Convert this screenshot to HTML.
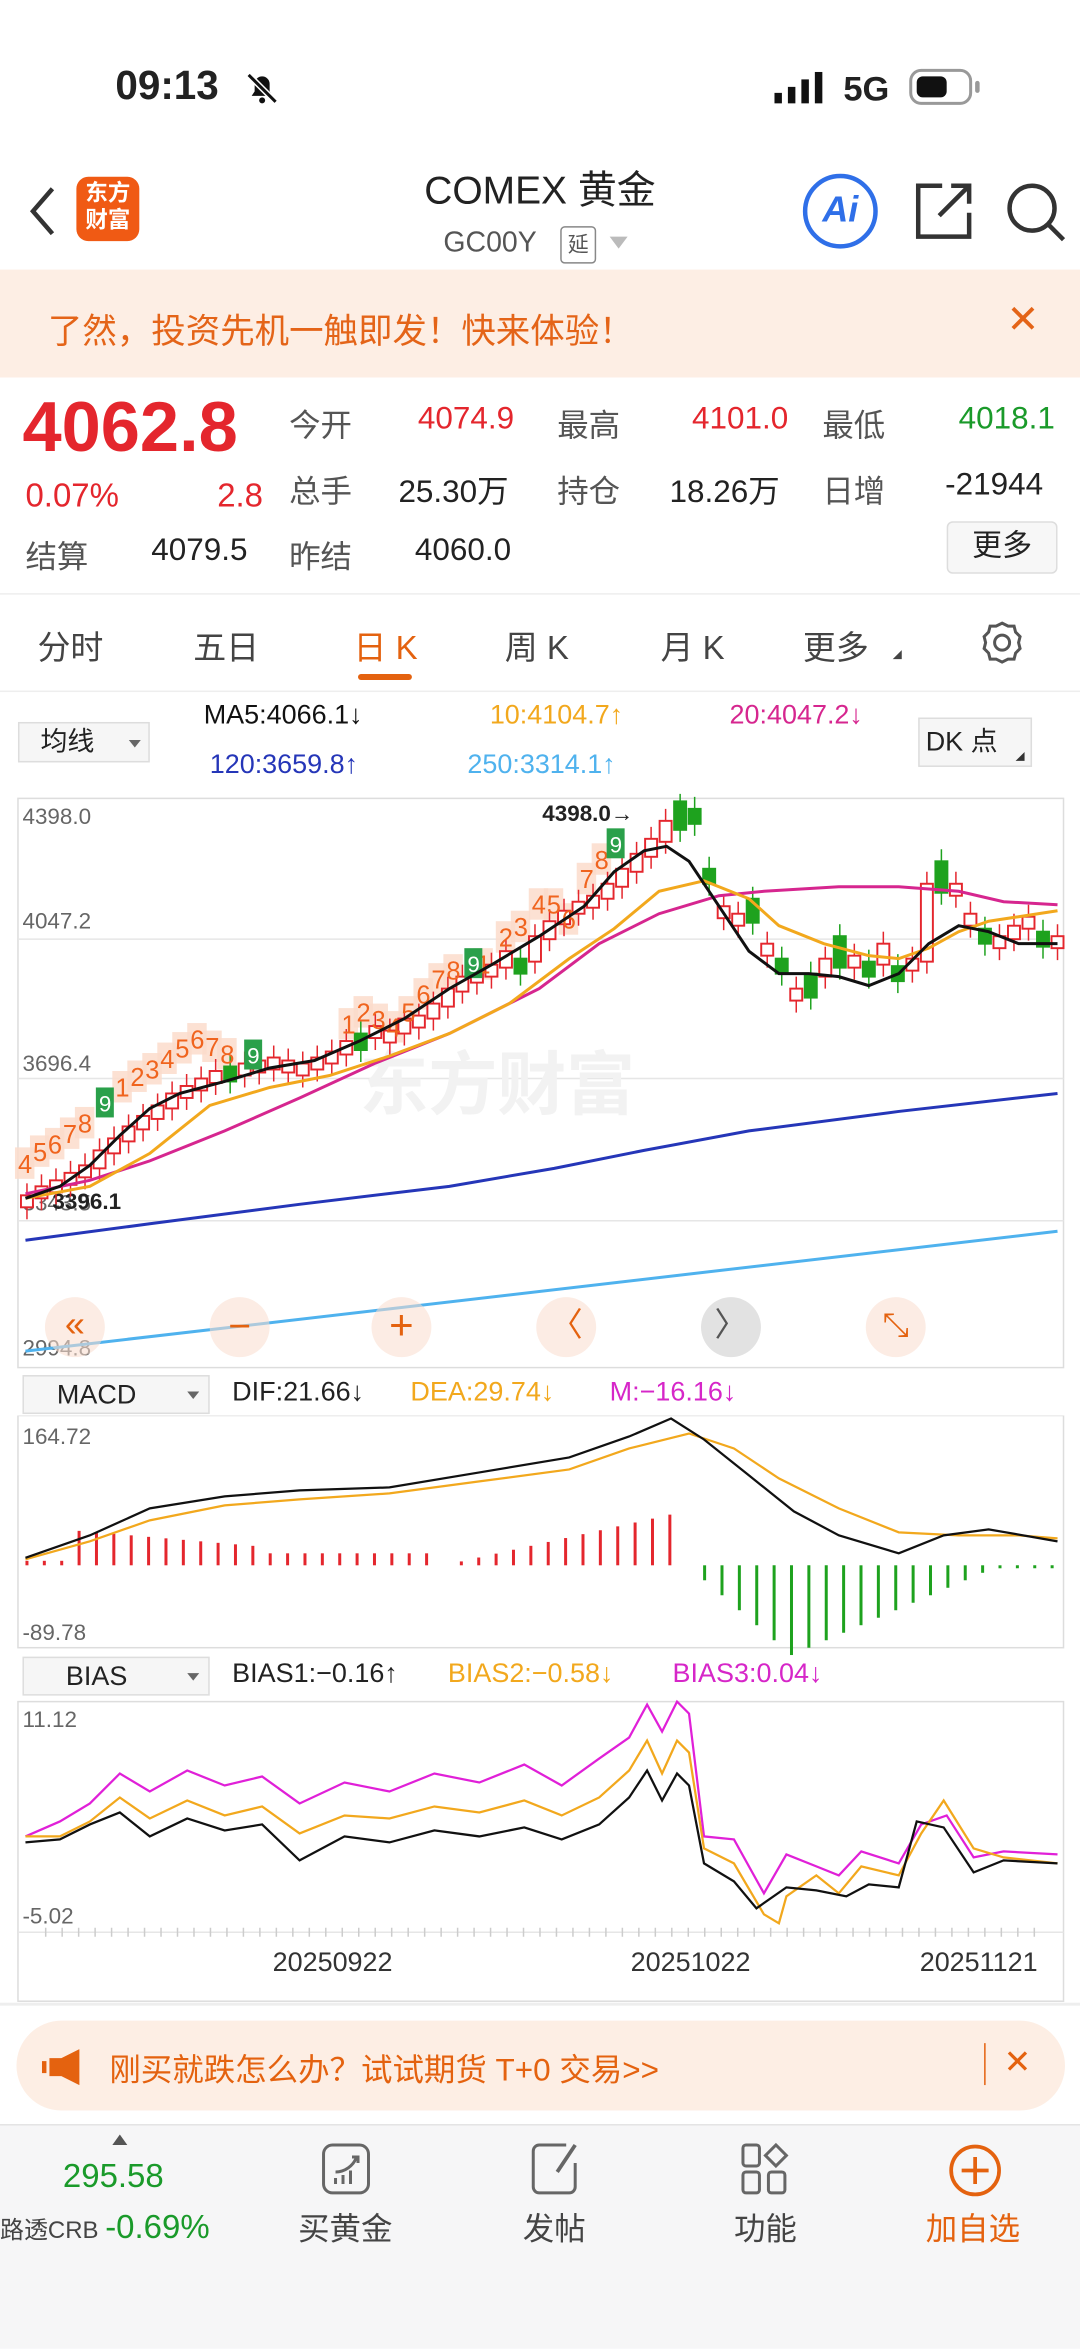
<!DOCTYPE html>
<html><head><meta charset="utf-8">
<style>
*{margin:0;padding:0;box-sizing:border-box}
html,body{width:1080px;height:2349px;overflow:hidden;background:#fff}
#w{position:absolute;left:0;top:0;width:721px;height:1568px;transform:scale(1.4979);transform-origin:0 0;font-family:"Liberation Sans","Noto Sans CJK SC",sans-serif;color:#222}
.a{position:absolute;white-space:nowrap}
.r{color:#e4262d}.g{color:#1a9a2a}.gy{color:#555}
</style></head><body><div id="w">
<!-- status -->
<div class="a" style="left:77px;top:42px;font-size:27px;font-weight:bold">09:13</div>
<svg class="a" style="left:162px;top:46px" width="26" height="26" viewBox="0 0 26 26"><path d="M6 18h14l-2-3v-5a5 5 0 0 0-10 0v5z" fill="#111"/><circle cx="13" cy="21" r="2" fill="#111"/><path d="M4 4l18 18" stroke="#fff" stroke-width="4"/><path d="M4 4l18 18" stroke="#111" stroke-width="2"/></svg>
<svg class="a" style="left:517px;top:48px" width="34" height="22"><rect x="0" y="14" width="5" height="7" fill="#111"/><rect x="9" y="10" width="5" height="11" fill="#111"/><rect x="18" y="5" width="5" height="16" fill="#111"/><rect x="27" y="0" width="5" height="21" fill="#111"/></svg>
<div class="a" style="left:563px;top:46px;font-size:23px;font-weight:bold">5G</div>
<div class="a" style="left:607px;top:46px;width:42px;height:24px;border:2px solid #999;border-radius:8px"><div style="margin:3px;width:20px;height:14px;background:#111;border-radius:4px"></div></div>
<div class="a" style="left:651px;top:54px;width:3px;height:8px;background:#999;border-radius:2px"></div>
<!-- header -->
<svg class="a" style="left:18px;top:124px" width="20" height="34"><path d="M17 2L4 17l13 15" stroke="#333" stroke-width="3" fill="none"/></svg>
<div class="a" style="left:51px;top:118px;width:42px;height:43px;background:#f05a14;border-radius:8px;color:#fff;font-size:15px;font-weight:bold;line-height:18px;text-align:center;padding-top:3px">东方<br>财富</div>
<div class="a" style="left:0;width:721px;top:107px;text-align:center;font-size:26px;color:#222">COMEX 黄金</div>
<div class="a" style="left:296px;top:152px;font-size:19px;color:#555">GC00Y</div>
<div class="a" style="left:374px;top:151px;width:24px;height:25px;border:1px solid #888;border-radius:3px;font-size:14px;text-align:center;line-height:23px;color:#555">延</div>
<div class="a" style="left:407px;top:158px;border-left:6px solid transparent;border-right:6px solid transparent;border-top:8px solid #bbb"></div>
<div class="a" style="left:536px;top:116px;width:50px;height:50px;border:3px solid #2f6fe8;border-radius:50%;color:#2f6fe8;font-weight:bold;font-size:24px;text-align:center;line-height:44px;font-style:italic">Ai</div>
<svg class="a" style="left:609px;top:120px" width="42" height="42"><path d="M20 4H4v34h34V22" stroke="#333" stroke-width="3" fill="none"/><path d="M18 24L38 4M26 4h12v12" stroke="#333" stroke-width="3" fill="none"/></svg>
<svg class="a" style="left:670px;top:120px" width="42" height="42"><circle cx="19" cy="19" r="15" stroke="#333" stroke-width="3" fill="none"/><path d="M30 30l10 10" stroke="#333" stroke-width="3"/></svg>
<!-- promo -->
<div class="a" style="left:0;top:180px;width:721px;height:72px;background:#fdeee4"></div>
<div class="a" style="left:32px;top:202px;font-size:23px;color:#e46418">了然，投资先机一触即发！快来体验！</div>
<div class="a" style="left:672px;top:198px;font-size:26px;color:#e46418">✕</div>
<!-- quote -->
<div class="a r" style="left:15px;top:257px;font-size:47px;font-weight:bold">4062.8</div>
<div class="a r" style="left:17px;top:318px;font-size:22px">0.07%</div>
<div class="a r" style="left:145px;top:318px;font-size:22px">2.8</div>
<div class="a gy" style="left:17px;top:356px;font-size:21px">结算</div>
<div class="a" style="left:101px;top:356px;font-size:21px">4079.5</div>
<div class="a gy" style="left:193px;top:268px;font-size:21px">今开</div>
<div class="a r" style="left:279px;top:268px;font-size:21px">4074.9</div>
<div class="a gy" style="left:372px;top:268px;font-size:21px">最高</div>
<div class="a r" style="left:462px;top:268px;font-size:21px">4101.0</div>
<div class="a gy" style="left:549px;top:268px;font-size:21px">最低</div>
<div class="a g" style="left:640px;top:268px;font-size:21px">4018.1</div>
<div class="a gy" style="left:193px;top:312px;font-size:21px">总手</div>
<div class="a" style="left:266px;top:312px;font-size:21px">25.30万</div>
<div class="a gy" style="left:372px;top:312px;font-size:21px">持仓</div>
<div class="a" style="left:447px;top:312px;font-size:21px">18.26万</div>
<div class="a gy" style="left:549px;top:312px;font-size:21px">日增</div>
<div class="a" style="left:631px;top:312px;font-size:21px">-21944</div>
<div class="a gy" style="left:193px;top:356px;font-size:21px">昨结</div>
<div class="a" style="left:277px;top:356px;font-size:21px">4060.0</div>
<div class="a" style="left:632px;top:348px;width:74px;height:35px;border:1px solid #ddd;border-radius:4px;background:#f7f7f7;font-size:20px;text-align:center;line-height:33px">更多</div>
<div class="a" style="left:0;top:396px;width:721px;height:1px;background:#eee"></div>
<!-- tabs -->
<div class="a" style="left:25px;top:415px;font-size:22px;color:#444">分时</div>
<div class="a" style="left:129px;top:415px;font-size:22px;color:#444">五日</div>
<div class="a" style="left:236px;top:415px;font-size:22px;color:#e4620f">日 K</div>
<div class="a" style="left:239px;top:450px;width:36px;height:4px;background:#e4620f;border-radius:2px"></div>
<div class="a" style="left:337px;top:415px;font-size:22px;color:#444">周 K</div>
<div class="a" style="left:441px;top:415px;font-size:22px;color:#444">月 K</div>
<div class="a" style="left:536px;top:415px;font-size:22px;color:#444">更多</div>
<div class="a" style="left:596px;top:434px;border-left:6px solid transparent;border-bottom:6px solid #444"></div>
<svg class="a" style="left:654px;top:414px" width="30" height="30" viewBox="0 0 30 30"><circle cx="15" cy="15" r="5" stroke="#555" stroke-width="2" fill="none"/><path d="M15 2l4 2 4 0 1 4 3 3-1 4 1 4-3 3-1 4-4 0-4 2-4-2-4 0-1-4-3-3 1-4-1-4 3-3 1-4 4 0z" stroke="#555" stroke-width="2" fill="none"/></svg>
<div class="a" style="left:0;top:461px;width:721px;height:1px;background:#eee"></div>
<!-- MA legend -->
<div class="a" style="left:12px;top:482px;width:88px;height:27px;border:1px solid #ddd;background:#f6f6f6;font-size:18px;line-height:25px;padding-left:14px">均线</div>
<div class="a" style="left:86px;top:494px;border-left:4px solid transparent;border-right:4px solid transparent;border-top:5px solid #666"></div>
<div class="a" style="left:136px;top:467px;font-size:18px;color:#111">MA5:4066.1↓</div>
<div class="a" style="left:327px;top:467px;font-size:18px;color:#f2a81d">10:4104.7↑</div>
<div class="a" style="left:487px;top:467px;font-size:18px;color:#d6268f">20:4047.2↓</div>
<div class="a" style="left:140px;top:500px;font-size:18px;color:#2536b8">120:3659.8↑</div>
<div class="a" style="left:312px;top:500px;font-size:18px;color:#4fb2ee">250:3314.1↑</div>
<div class="a" style="left:613px;top:479px;width:76px;height:33px;border:1px solid #ddd;background:#f6f6f6;font-size:18px;line-height:31px;padding-left:4px">DK 点</div>
<div class="a" style="left:678px;top:502px;border-left:6px solid transparent;border-bottom:6px solid #333"></div>
<!-- main chart -->
<svg class="a" style="left:0;top:530px" width="721" height="385">
<rect x="12" y="3" width="698" height="380" fill="none" stroke="#ddd"/>
<line x1="12" y1="97" x2="710" y2="97" stroke="#e6e6e6"/>
<line x1="12" y1="190" x2="710" y2="190" stroke="#e6e6e6"/>
<line x1="12" y1="285" x2="710" y2="285" stroke="#e6e6e6"/>
<text x="240" y="210" font-size="46" fill="#f2f2f2" font-weight="bold" font-family="Noto Sans CJK SC">东方财富</text>
<g font-size="15" fill="#666" font-family="Liberation Sans"><text x="15" y="20">4398.0</text><text x="15" y="90">4047.2</text><text x="15" y="185">3696.4</text><text x="15" y="278">3343.5</text><text x="15" y="375">2994.8</text></g>
<text x="362" y="18" font-size="15" fill="#222" font-weight="bold">4398.0→</text>
<text x="35" y="277" font-size="15" fill="#222" font-weight="bold">3396.1</text>
<g id="bg"></g>
<g id="cand"></g>
<g id="td" font-size="17" fill="#f0641e" font-family="Liberation Sans">
<text x="12" y="253">4</text><text x="22" y="245">5</text><text x="32" y="240">6</text><text x="42" y="233">7</text><text x="52" y="226">8</text>
<text x="77" y="202">1</text><text x="87" y="195">2</text><text x="97" y="190">3</text><text x="107" y="183">4</text><text x="117" y="176">5</text><text x="127" y="170">6</text><text x="137" y="175">7</text><text x="147" y="180">8</text>
<text x="228" y="160">1</text><text x="238" y="152">2</text><text x="248" y="157">3</text><text x="258" y="162">4</text><text x="268" y="152">5</text><text x="278" y="140">6</text><text x="288" y="130">7</text><text x="298" y="124">8</text><text x="318" y="120">1</text>
<text x="333" y="102">2</text><text x="343" y="95">3</text><text x="355" y="80">4</text><text x="365" y="80">5</text><text x="375" y="90">6</text><text x="387" y="63">7</text><text x="397" y="50">8</text>
</g>
<g fill="#2aa04a"><rect x="64" y="196" width="12" height="20"/><rect x="163" y="164" width="12" height="20"/><rect x="310" y="103" width="12" height="20"/><rect x="405" y="23" width="12" height="20"/></g>
<g fill="#fff" font-size="15"><text x="66" y="212">9</text><text x="165" y="180">9</text><text x="312" y="119">9</text><text x="407" y="39">9</text></g>
<polyline fill="none" stroke="#4fb2ee" stroke-width="2" points="17,372 706,292" />
<polyline fill="none" stroke="#2536b8" stroke-width="2" points="17,298 100,287 200,274 300,262 370,250 430,238 500,225 600,212 706,200"/>
<polyline fill="none" stroke="#d6268f" stroke-width="2" points="17,267 60,258 100,245 150,225 200,203 250,180 300,160 360,130 400,100 440,80 480,68 510,65 560,62 600,62 640,65 670,72 706,74"/>
<polyline fill="none" stroke="#f2a81d" stroke-width="2" points="17,270 60,262 100,240 140,208 180,196 220,188 260,175 300,160 340,140 380,110 410,90 440,65 470,58 500,70 520,88 550,100 580,108 600,110 620,103 640,92 660,85 680,82 706,78"/>
<polyline fill="none" stroke="#111" stroke-width="2" points="17,270 40,262 60,248 80,228 100,210 120,200 150,192 180,183 210,178 240,165 270,150 300,130 330,113 360,95 390,75 410,52 430,38 445,35 460,45 480,75 500,105 520,120 540,120 560,122 580,128 600,120 620,100 640,88 660,92 680,100 706,100"/>
</svg>
<!-- buttons -->
<div class="a" style="left:30px;top:866px;width:40px;height:40px;border-radius:50%;background:rgba(250,220,205,.55);color:#e4620f;font-size:24px;text-align:center;line-height:38px">«</div>
<div class="a" style="left:140px;top:866px;width:40px;height:40px;border-radius:50%;background:rgba(250,220,205,.55);color:#e4620f;font-size:26px;text-align:center;line-height:38px">−</div>
<div class="a" style="left:248px;top:866px;width:40px;height:40px;border-radius:50%;background:rgba(250,220,205,.55);color:#e4620f;font-size:28px;text-align:center;line-height:38px">+</div>
<div class="a" style="left:358px;top:866px;width:40px;height:40px;border-radius:50%;background:rgba(250,220,205,.55);color:#e4620f;font-size:22px;text-align:center;line-height:38px">〈</div>
<div class="a" style="left:468px;top:866px;width:40px;height:40px;border-radius:50%;background:#e2e2e2;color:#555;font-size:22px;text-align:center;line-height:38px">〉</div>
<div class="a" style="left:578px;top:866px;width:40px;height:40px;border-radius:50%;background:rgba(250,220,205,.55);color:#e4620f;font-size:22px;text-align:center;line-height:38px">⤡</div>
<!-- MACD -->
<div class="a" style="left:15px;top:918px;width:125px;height:26px;border:1px solid #ddd;background:#f6f6f6;font-size:18px;line-height:24px;padding-left:22px">MACD</div>
<div class="a" style="left:125px;top:929px;border-left:4px solid transparent;border-right:4px solid transparent;border-top:5px solid #666"></div>
<div class="a" style="left:155px;top:919px;font-size:18px">DIF:21.66↓</div>
<div class="a" style="left:274px;top:919px;font-size:18px;color:#f2a81d">DEA:29.74↓</div>
<div class="a" style="left:407px;top:919px;font-size:18px;color:#d626c8">M:−16.16↓</div>
<svg class="a" style="left:0;top:945px" width="721" height="160">
<rect x="12" y="0" width="698" height="155" fill="none" stroke="#ddd"/>
<text x="15" y="19" font-size="15" fill="#666">164.72</text><text x="15" y="150" font-size="15" fill="#666">-89.78</text>
<g id="macd"></g>
<polyline fill="none" stroke="#f2a81d" stroke-width="1.5" points="17,96 60,84 100,70 150,60 200,56 260,52 320,44 380,36 420,22 460,12 490,22 520,42 560,62 600,78 640,80 680,80 706,82"/>
<polyline fill="none" stroke="#111" stroke-width="1.5" points="17,95 60,80 100,62 150,54 200,50 260,48 320,38 380,28 420,14 448,2 470,16 500,40 530,64 560,80 600,92 630,80 660,76 706,84"/>
</svg>
<!-- BIAS -->
<div class="a" style="left:15px;top:1106px;width:125px;height:26px;border:1px solid #ddd;background:#f6f6f6;font-size:18px;line-height:24px;padding-left:28px">BIAS</div>
<div class="a" style="left:125px;top:1117px;border-left:4px solid transparent;border-right:4px solid transparent;border-top:5px solid #666"></div>
<div class="a" style="left:155px;top:1107px;font-size:18px">BIAS1:−0.16↑</div>
<div class="a" style="left:299px;top:1107px;font-size:18px;color:#f2a81d">BIAS2:−0.58↓</div>
<div class="a" style="left:449px;top:1107px;font-size:18px;color:#d626c8">BIAS3:0.04↓</div>
<svg class="a" style="left:0;top:1134px" width="721" height="205">
<rect x="12" y="2" width="698" height="200" fill="none" stroke="#ddd"/>
<text x="15" y="19" font-size="15" fill="#666">11.12</text><text x="15" y="150" font-size="15" fill="#666">-5.02</text>
<line x1="12" y1="156" x2="710" y2="156" stroke="#e6e6e6"/>
<polyline fill="none" stroke="#e020d8" stroke-width="1.5" points="17,92 40,82 60,70 80,50 100,62 125,48 150,58 175,52 200,70 230,56 260,62 290,50 320,56 350,44 375,58 400,40 420,26 432,4 442,22 452,2 460,10 470,92 490,94 510,130 525,104 545,112 560,118 575,102 600,110 615,84 632,78 650,106 670,102 706,104"/>
<polyline fill="none" stroke="#f2a81d" stroke-width="1.5" points="17,92 40,92 60,82 80,66 100,80 125,68 150,78 175,72 200,90 230,78 260,80 290,72 320,76 350,68 375,78 400,66 420,48 432,28 442,50 452,28 460,36 470,100 490,110 510,144 520,150 525,132 545,118 560,130 575,112 600,118 615,90 630,68 650,100 670,106 706,110"/>
<polyline fill="none" stroke="#111" stroke-width="1.5" points="17,96 40,94 60,84 80,76 100,92 125,80 150,88 175,84 200,108 230,92 260,96 290,88 320,92 350,86 375,94 400,84 420,66 432,48 442,68 452,50 460,58 470,110 490,122 505,140 525,126 545,128 565,132 580,124 600,126 612,82 630,86 650,116 670,108 706,110"/>
<g stroke="#ccc"><line x1="30" y1="156" x2="700" y2="156" stroke-dasharray="1 10" stroke-width="6"/></g>
<text x="182" y="182" font-size="18" fill="#333">20250922</text><text x="421" y="182" font-size="18" fill="#333">20251022</text><text x="614" y="182" font-size="18" fill="#333">20251121</text>
</svg>
<!-- bottom banner -->
<div class="a" style="left:0;top:1337px;width:721px;height:2px;background:#eee"></div>
<div class="a" style="left:11px;top:1349px;width:700px;height:60px;background:#fdeee4;border-radius:30px"></div>
<svg class="a" style="left:28px;top:1368px" width="30" height="24"><rect x="0" y="8" width="3" height="8" fill="#e4620f"/><path d="M5 6h8l12-6v24l-12-6H5z" fill="#e4620f"/></svg>
<div class="a" style="left:73px;top:1366px;font-size:21px;color:#e4620f">刚买就跌怎么办？试试期货 T+0 交易&gt;&gt;</div>
<div class="a" style="left:657px;top:1364px;width:1px;height:28px;background:#e4620f"></div>
<div class="a" style="left:670px;top:1364px;font-size:22px;color:#e4620f">✕</div>
<!-- bottom nav -->
<div class="a" style="left:0;top:1418px;width:721px;height:150px;background:#f6f6f7;border-top:1px solid #e4e4e4"></div>
<div class="a" style="left:75px;top:1425px;border-left:5px solid transparent;border-right:5px solid transparent;border-bottom:7px solid #555"></div>
<div class="a g" style="left:42px;top:1440px;font-size:22px">295.58</div>
<div class="a" style="left:0;top:1474px;font-size:16px;color:#444">路透CRB <span class="g" style="font-size:22px">-0.69%</span></div>
<svg class="a" style="left:214px;top:1430px" width="36" height="36"><rect x="2" y="2" width="30" height="32" rx="6" stroke="#666" stroke-width="2" fill="none"/><path d="M10 28v-4M15 28v-6M20 28v-9M10 20c6 0 12-4 14-10M21 10h4v4" stroke="#666" stroke-width="2" fill="none"/></svg>
<div class="a" style="left:199px;top:1472px;font-size:21px;color:#444">买黄金</div>
<svg class="a" style="left:354px;top:1430px" width="36" height="36"><path d="M24 2H6a4 4 0 0 0-4 4v24a4 4 0 0 0 4 4h20a4 4 0 0 0 4-4V14" stroke="#666" stroke-width="2" fill="none"/><path d="M30 2L18 20" stroke="#666" stroke-width="2.5"/></svg>
<div class="a" style="left:349px;top:1472px;font-size:21px;color:#444">发帖</div>
<svg class="a" style="left:494px;top:1430px" width="36" height="36"><rect x="2" y="2" width="11" height="14" rx="2" stroke="#666" stroke-width="2" fill="none"/><rect x="2" y="20" width="11" height="14" rx="2" stroke="#666" stroke-width="2" fill="none"/><rect x="19" y="20" width="11" height="14" rx="2" stroke="#666" stroke-width="2" fill="none"/><path d="M24 2l7 7-7 7-7-7z" stroke="#666" stroke-width="2" fill="none"/></svg>
<div class="a" style="left:490px;top:1472px;font-size:21px;color:#444">功能</div>
<svg class="a" style="left:632px;top:1430px" width="38" height="38"><circle cx="19" cy="19" r="16" stroke="#e4620f" stroke-width="2.5" fill="none"/><path d="M19 10v18M10 19h18" stroke="#e4620f" stroke-width="2.5"/></svg>
<div class="a" style="left:618px;top:1472px;font-size:21px;color:#e4620f">加自选</div>
</div>
<script>
(function(){
var ys=[268,262,258,253,248,238,230,222,215,208,200,195,190,185,182,180,178,176,178,180,176,172,165,160,155,158,150,148,140,130,122,118,114,105,110,95,85,78,72,68,60,50,40,30,18,5,10,50,75,80,70,100,110,130,120,110,95,108,112,100,115,110,60,45,60,80,90,95,88,82,92,95];
var n=ys.length,x0=18,dx=(706-x0)/(n-1),g=document.getElementById('cand'),s='',p=ys[0]+4;
var downs={14:1,23:1,34:1,45:1,46:1,47:1,50:1,52:1,54:1,56:1,58:1,60:1,63:1,66:1,70:1};
for(var i=0;i<n;i++){var x=x0+i*dx,c=ys[i],o=p;var up=!downs[i];if(up){o=Math.max(c+6,p);}else{o=c;c=Math.max(c+8,p+4)}
var t=Math.min(o,c),h=Math.abs(o-c)+2,col=up?'#e4262d':'#1ea21e';
s+='<line x1="'+x+'" x2="'+x+'" y1="'+(t-8)+'" y2="'+(t+h+8)+'" stroke="'+col+'"/>';
s+='<rect x="'+(x-4)+'" y="'+t+'" width="8" height="'+h+'" fill="'+(up?'#fff':col)+'" stroke="'+col+'" stroke-width="1.3"/>';p=ys[i];}
g.innerHTML=s;
var tds=document.querySelectorAll('#td text'),b='';
for(var k=0;k<tds.length;k++){var tx=+tds[k].getAttribute('x'),ty=+tds[k].getAttribute('y');b+='<rect x="'+(tx-2)+'" y="'+(ty-17)+'" width="13" height="21" fill="#fcdccb" opacity="0.85"/>';}
document.getElementById('bg').innerHTML=b;
var m=document.getElementById('macd');s='';
for(var i=0;i<60;i++){var x=18+i*11.6,v;
var y0=100;if(i<38){var hh=i<3?3:(i<14?26-i:(i<24?8:Math.min(36,(i-24)*2.6)));s+='<line x1="'+x+'" x2="'+x+'" y1="'+(y0-hh)+'" y2="'+y0+'" stroke="#e4262d" stroke-width="2"/>';}
else{v=i<44?(i-38)*10:Math.max(2,60-(i-44)*5);s+='<line x1="'+x+'" x2="'+x+'" y1="'+y0+'" y2="'+(y0+v)+'" stroke="#1ea21e" stroke-width="2"/>';}}
m.innerHTML=s;
})();
</script>
</body></html>
